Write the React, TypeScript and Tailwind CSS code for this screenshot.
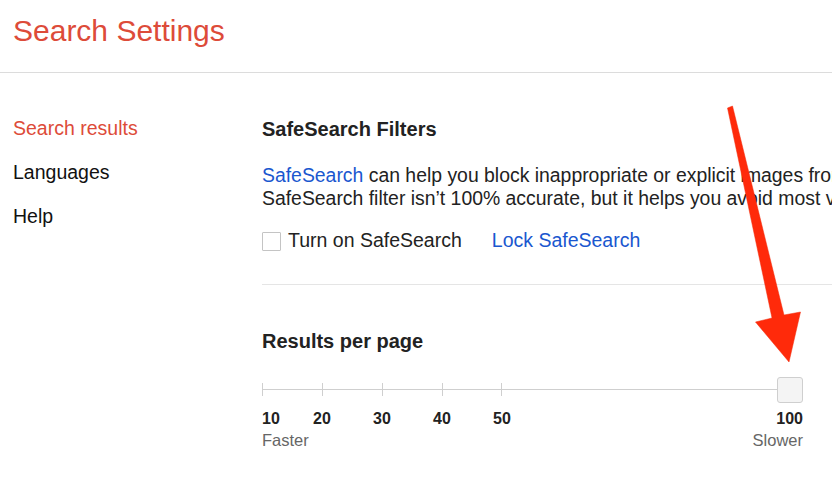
import React from 'react';

const ticks = [0, 60, 120, 180, 239, 540];

function Slider() {
  return (
    <div className="relative w-[541px] h-[26px]">
      <svg width="541" height="26" className="block">
        <line x1="0" y1="12.5" x2="541" y2="12.5" stroke="#cfcfcf" strokeWidth="1" />
        {ticks.map((x) => (
          <line key={x} x1={x + 0.5} y1="6" x2={x + 0.5} y2="19" stroke="#cfcfcf" strokeWidth="1" />
        ))}
      </svg>
      <div className="absolute right-0 top-0 w-[26px] h-[26px] rounded-[3px] bg-[#f4f4f4] border border-[#cfcfcf]" />
    </div>
  );
}

function Arrow() {
  return (
    <svg className="absolute left-0 top-0 pointer-events-none" width="832" height="483">
      <polygon
        points="727.5,108 732.5,106 784,315 800.5,312 789,362 755.5,322 772,318"
        fill="#ff2a0a"
        stroke="#f02a0a"
        strokeWidth="0.5"
        strokeLinejoin="round"
      />
    </svg>
  );
}

export default function App() {
  const nav = ["Search results", "Languages", "Help"];

  return (
    <div className="relative w-[832px] h-[483px] overflow-hidden bg-white text-[#222] font-['Liberation_Sans',Arial,sans-serif]">
      <div className="h-[73px] border-b border-[#dcdcdc] pl-[13px] pt-[13px]">
        <h1 className="text-[30px] leading-[36px] text-[#dd4b39]">Search Settings</h1>
      </div>

      <div className="flex">
        <ul className="w-[262px] shrink-0 pl-[13px] pt-[33px]">
          {nav.map((item, i) => (
            <li key={item} className={`text-[19.5px] leading-[44px] ${i === 0 ? 'text-[#dd4b39]' : 'text-[#111]'}`}>
              {item}
            </li>
          ))}
        </ul>

        <div className="flex-1 min-w-0 pt-[44px]">
          <h2 className="text-[20px] leading-[24px] font-bold">SafeSearch Filters</h2>
          <p className="mt-[23px] text-[19.4px] leading-[23px] whitespace-nowrap">
            <span className="text-[#1a57cf]">SafeSearch</span> can help you block inappropriate or explicit images from your Google Search results. The
            <br />
            SafeSearch filter isn’t 100% accurate, but it helps you avoid most violent and adult content.
          </p>
          <div className="mt-[19px] flex items-center h-[24px] text-[19.5px]">
            <span className="w-[19px] h-[19px] border border-[#c4c4c4] rounded-[1px] bg-white" />
            <span className="ml-[7px]">Turn on SafeSearch</span>
            <span className="ml-[30px] text-[#1a57cf]">Lock SafeSearch</span>
          </div>

          <div className="mt-[31px] border-t border-[#e5e5e5]" />

          <h2 className="mt-[44px] text-[20px] leading-[24px] font-bold">Results per page</h2>
          <div className="mt-[24px]">
            <Slider />
          </div>
          <div className="mt-[7px] flex w-[541px] text-[16px] leading-[18px] font-bold">
            <span className="w-[30px]">10</span>
            {["20", "30", "40", "50"].map((n) => (
              <span key={n} className="w-[60px] text-center">{n}</span>
            ))}
            <span className="ml-auto">100</span>
          </div>
          <div className="mt-[3px] flex w-[541px] text-[16.5px] leading-[18px] text-[#666]">
            <span>Faster</span>
            <span className="ml-auto">Slower</span>
          </div>
        </div>
      </div>

      <Arrow />
    </div>
  );
}
